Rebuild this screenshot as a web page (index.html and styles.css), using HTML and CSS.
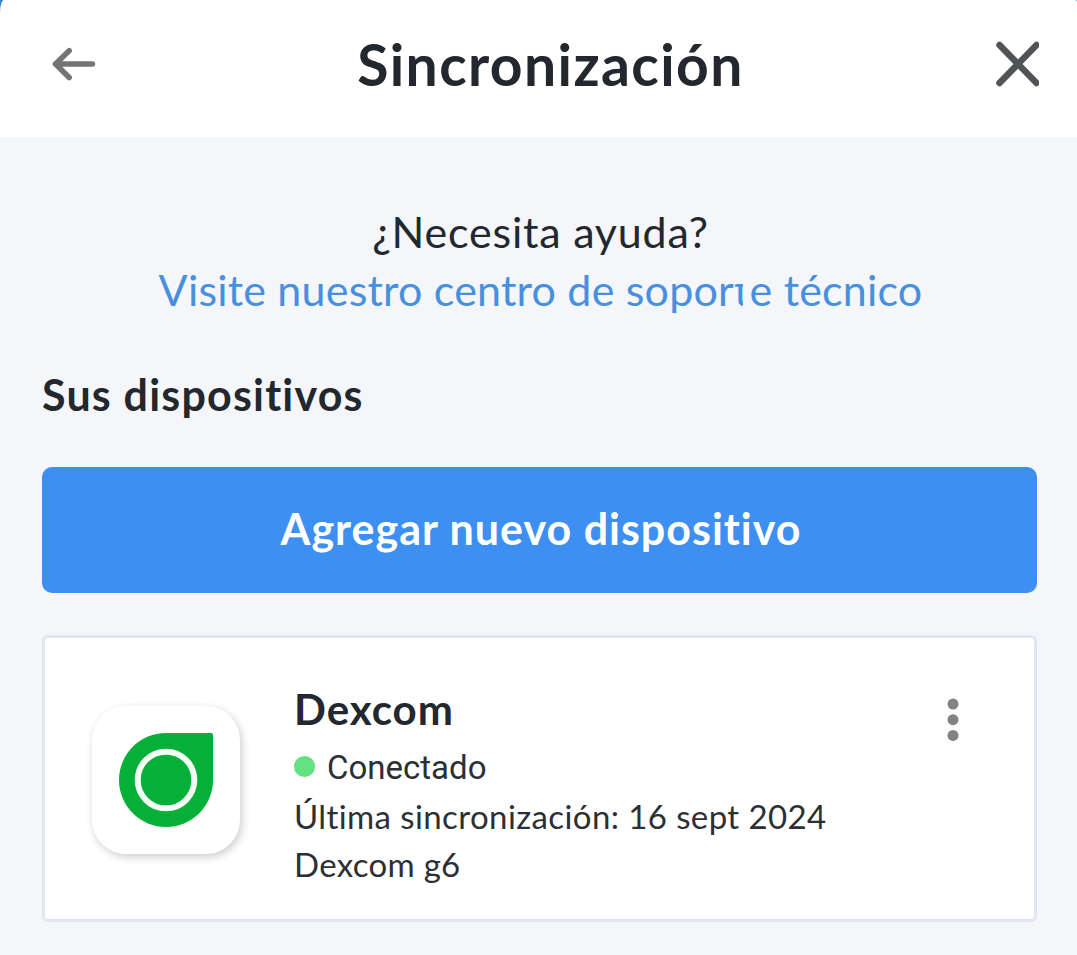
FILE: index.html
```html
<!doctype html>
<html lang="es">

<head>
<meta charset="utf-8" />
<meta name="viewport" content="width=device-width, initial-scale=1" />
<title>Sincronización</title>
<link rel="stylesheet" href="styles.css">
</head>

<body>

<div class="top">
	<header class="header">
		<a href="#" class="back" aria-label="Atrás">
			<svg width="44" height="34" viewBox="0 0 44 34"><path d="M17.200 3.700L3.500 17L17.200 30.500M3.500 17H40.500" /></svg>
		</a>
		<h1>Sincronización</h1>
		<a href="#" class="close" aria-label="Cerrar">
			<svg width="43" height="46" viewBox="0 0 43 46"><path d="M3.500 4L40.500 42M40.500 4L3.500 42" /></svg>
		</a>
	</header>
</div>

<main class="content">
	<div class="help">
		<p>¿Necesita ayuda?</p>
		<a href="#">Visite nuestro centro de sopor<span class="worn">t</span>e técnico</a>
	</div>

	<h2>Sus dispositivos</h2>
	<button class="add">Agregar nuevo dispositivo</button>

	<section class="device">
		<div class="logo">
			<svg width="96" height="96" viewBox="0 0 96 96">
				<path fill="#04b038" d="M48 1H93Q95 1 95 3V48A47 47 0 1 1 48 1Z" />
				<circle cx="48" cy="48" r="28.300" fill="none" stroke="#f3fff5" stroke-width="6" />
			</svg>
		</div>
		<div class="info">
			<h3>Dexcom</h3>
			<p class="status">Conectado</p>
			<p class="sync">Última sincronización: 16 sept 2024</p>
			<p class="model">Dexcom g6</p>
		</div>
		<a href="#" class="more" aria-label="Opciones">
			<svg width="12" height="44" viewBox="0 0 12 44"><circle cx="6" cy="6" r="5.500" /><circle cx="6" cy="21.700" r="5.500" /><circle cx="6" cy="37.400" r="5.500" /></svg>
		</a>
	</section>
</main>

</body>

</html>
```

FILE: styles.css
```css
* {
	margin: 0;
	padding: 0;
	box-sizing: border-box;
}
body {
	background: #f4f6fa;
	color: #22282e;
	font-family: Lato, "Open Sans", sans-serif;
	overflow: hidden;
}
svg {
	display: block;
}
h1, h2, h3, p, .help a, .add {
	white-space: nowrap;
}
.top {
	background: #3c82cf;
}
.header {
	display: flex;
	align-items: center;
	justify-content: space-between;
	height: 137px;
	padding: 0 38px 10px 52px;
	background: #fff;
	border-radius: 4px 2px 0 0 / 13px 2px 0 0;
}
.header path {
	fill: none;
	stroke-linecap: round;
	stroke-linejoin: round;
}
.back path {
	stroke: #747474;
	stroke-width: 5.500;
}
.close path {
	stroke: #505458;
	stroke-width: 6.500;
}
h1 {
	padding-left: 9px;
	font-size: 57px;
	line-height: 70px;
	letter-spacing: 1.4px;
}
.content {
	padding: 66px 40px 0 42px;
}
.help {
	padding-left: 2px;
	font-size: 43px;
	line-height: 58px;
	text-align: center;
}
.help p {
	letter-spacing: .8px;
}
.help a {
	color: #4790df;
	text-decoration: none;
	letter-spacing: .2px;
}
/* the "t" is partly rubbed out */
.worn {
	position: relative;
}
.worn::before, .worn::after {
	content: "";
	position: absolute;
	background: #f4f6fa;
}
.worn::before {
	left: 0;
	top: 8px;
	width: 16px;
	height: 12px;
}
.worn::after {
	left: 9px;
	top: 19px;
	width: 7px;
	height: 28px;
}
h2 {
	margin-top: 47px;
	font-size: 43px;
	line-height: 58px;
	letter-spacing: 1.2px;
}
.add {
	display: block;
	width: 100%;
	height: 126px;
	margin-top: 43px;
	padding: 0 0 3px 3px;
	border: 0;
	border-radius: 10px;
	background: #3d8ff2;
	color: #fff;
	font: bold 43px Lato, "Open Sans", sans-serif;
	letter-spacing: 1px;
}
.device {
	display: flex;
	align-items: flex-start;
	height: 287px;
	margin-top: 42px;
	padding: 45px 75px 0 47px;
	border: 3px solid #e1e5ed;
	border-radius: 6px;
	background: #fff;
}
.logo {
	display: flex;
	align-items: center;
	justify-content: center;
	width: 148px;
	height: 148px;
	margin: 23px 54px 0 0;
	border-radius: 34px;
	background: #fff;
	box-shadow: 2px 3px 8px rgba(0, 0, 0, .2);
}
.info {
	flex: 1;
	margin-top: -3px;
	font-size: 33px;
	line-height: 48px;
	color: #2b3035;
}
h3 {
	margin-bottom: 6px;
	font-size: 42px;
	line-height: 58px;
	letter-spacing: 1px;
	color: #22282e;
}
.status {
	display: flex;
	align-items: center;
	gap: 12px;
	font-family: Roboto, sans-serif;
}
.status::before {
	content: "";
	width: 21px;
	height: 21px;
	margin-top: -4px;
	border-radius: 50%;
	background: #63e07f;
}
.sync {
	letter-spacing: .4px;
}
.model {
	letter-spacing: .3px;
}
.more {
	margin-top: 15px;
	fill: #808285;
}
```
